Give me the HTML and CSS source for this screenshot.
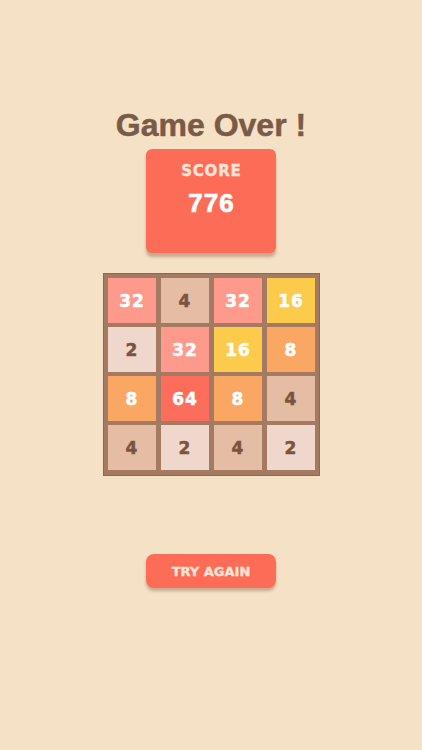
FILE: index.html
```html
<!DOCTYPE html>
<html lang="en">
<head>
    <meta charset="UTF-8">
    <meta name="viewport" content="width=device-width, initial-scale=1.0">
    <title>2048 - Game Over</title>
    <link rel="stylesheet" href="styles.css">
</head>
<body>
    <div class="screen">
        <h1 class="title">Game Over !</h1>

        <div class="score-box">
            <div class="score-label">SCORE</div>
            <div class="score-value">776</div>
        </div>

        <div class="board">
            <div class="tile t32">32</div>
            <div class="tile t4">4</div>
            <div class="tile t32">32</div>
            <div class="tile t16">16</div>

            <div class="tile t2">2</div>
            <div class="tile t32">32</div>
            <div class="tile t16">16</div>
            <div class="tile t8">8</div>

            <div class="tile t8">8</div>
            <div class="tile t64">64</div>
            <div class="tile t8">8</div>
            <div class="tile t4">4</div>

            <div class="tile t4">4</div>
            <div class="tile t2">2</div>
            <div class="tile t4">4</div>
            <div class="tile t2">2</div>
        </div>

        <button class="retry">TRY AGAIN</button>
    </div>
</body>
</html>
```

FILE: styles.css
```css
body {
    margin: 0;
    padding: 0;
    background-color: #f5e1c6;
    font-family: 'Liberation Sans', Arial, sans-serif;
}

.screen {
    width: 422px;
    height: 750px;
    display: flex;
    flex-direction: column;
    align-items: center;
}

.title {
    margin: 105px 0 0;
    height: 40px;
    line-height: 40px;
    font-size: 32px;
    font-weight: bold;
    color: #7b5a46;
    -webkit-text-stroke: 0.5px #7b5a46;
}

.score-box {
    margin-top: 4px;
    width: 130px;
    height: 104px;
    background-color: #fd6c56;
    border-radius: 6px;
    box-shadow: 0 4px 3px rgba(110, 70, 40, 0.35);
    display: flex;
    flex-direction: column;
    align-items: center;
}

.score-label {
    margin-top: 15px;
    height: 15px;
    line-height: 15px;
    font-family: 'DejaVu Sans', sans-serif;
    font-size: 15px;
    font-weight: bold;
    letter-spacing: 0.8px;
    padding-left: 0.8px;
    color: #fde4d6;
    -webkit-text-stroke: 0.4px #fde4d6;
}

.score-value {
    margin-top: 12px;
    height: 25px;
    line-height: 25px;
    font-size: 26px;
    font-weight: bold;
    letter-spacing: 1px;
    padding-left: 1px;
    color: #ffffff;
    -webkit-text-stroke: 0.7px #ffffff;
}

.board {
    margin-top: 20px;
    padding: 4px 4px 5px;
    border: 1px solid #946650;
    background-color: #a57a62;
    display: grid;
    grid-template-columns: repeat(4, 48px);
    grid-template-rows: repeat(4, 45px);
    gap: 4px 5px;
}

.tile {
    display: flex;
    align-items: center;
    justify-content: center;
    font-family: 'DejaVu Sans', sans-serif;
    font-size: 17px;
    font-weight: bold;
    letter-spacing: 1px;
    padding-left: 1px;
    color: #ffffff;
    -webkit-text-stroke: 0.5px currentColor;
}

.t2 {
    background-color: #efd8cb;
    color: #7a5440;
}

.t4 {
    background-color: #e5bda5;
    color: #7a5440;
}

.t8 {
    background-color: #fba764;
}

.t16 {
    background-color: #fdcb4c;
}

.t32 {
    background-color: #fd9a8b;
}

.t64 {
    background-color: #fc6e5b;
}

.retry {
    margin-top: 78px;
    width: 130px;
    height: 34px;
    border: none;
    border-radius: 8px;
    background-color: #fd6c56;
    box-shadow: 0 3px 3px rgba(110, 70, 40, 0.35);
    font-family: 'DejaVu Sans', sans-serif;
    font-size: 13px;
    font-weight: bold;
    color: #fde4d6;
    -webkit-text-stroke: 0.4px #fde4d6;
    cursor: pointer;
}
```
